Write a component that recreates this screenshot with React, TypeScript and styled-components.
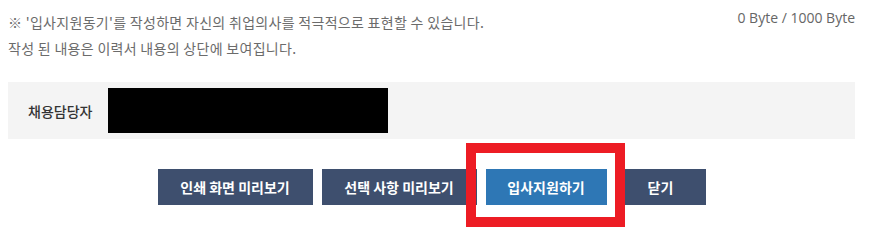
import React from "react";
import styled, { createGlobalStyle } from "styled-components";

const GlobalStyle = createGlobalStyle`
  html, body { margin: 0; padding: 0; background: #fff; }
  body { font-family: "Noto Sans CJK KR", "Noto Sans", sans-serif; }
`;

const Page = styled.div`
  width: 847px;
  min-height: 249px;
  margin-left: 8px;
  overflow: visible;
`;

const TopRow = styled.div`
  display: flex;
  justify-content: space-between;
  align-items: flex-start;
`;

const Notice = styled.div`
  padding-top: 9px;
  font-size: 14px;
  line-height: 26px;
  letter-spacing: 0.3px;
  color: #6b6b6b;
`;

const Counter = styled.div`
  padding-top: 5px;
  font-family: "Open Sans", "Noto Sans", sans-serif;
  font-size: 14px;
  line-height: 26px;
  color: #666;
`;

const InfoBox = styled.div`
  margin-top: 21px;
  height: 57px;
  background: #f4f4f4;
  display: flex;
  align-items: center;
  padding-left: 20px;
  box-sizing: border-box;
`;

const Label = styled.div`
  width: 80px;
  font-size: 14px;
  font-weight: 500;
  color: #333;
`;

const Redacted = styled.div`
  width: 280px;
  height: 45px;
  background: #000;
`;

const ButtonRow = styled.div`
  margin-top: 30px;
  display: flex;
  justify-content: center;
  gap: 9px;
`;

const Button = styled.button<{ $w: number; $primary?: boolean }>`
  display: block;
  width: ${(p) => p.$w}px;
  height: 36px;
  border: 0;
  padding: 0;
  background: ${(p) => (p.$primary ? "#2e77b5" : "#3e4f6e")};
  color: #fff;
  font-family: "Noto Sans CJK KR", "Noto Sans", sans-serif;
  font-size: 14px;
  font-weight: 700;
  cursor: pointer;
`;

const Marked = styled.div`
  position: relative;
  z-index: 1;
`;

const Highlight = styled.span`
  position: absolute;
  left: -20px;
  right: -18px;
  top: -26px;
  bottom: -22px;
  border: 10px solid #ed1c24;
  pointer-events: none;
`;

export default function App() {
  return (
    <>
      <GlobalStyle />
      <Page>
        <TopRow>
          <Notice>
            ※ '입사지원동기'를 작성하면 자신의 취업의사를 적극적으로 표현할 수 있습니다.
            <br />
            작성 된 내용은 이력서 내용의 상단에 보여집니다.
          </Notice>
          <Counter>0 Byte / 1000 Byte</Counter>
        </TopRow>
        <InfoBox>
          <Label>채용담당자</Label>
          <Redacted />
        </InfoBox>
        <ButtonRow>
          <Button $w={155}>인쇄 화면 미리보기</Button>
          <Button $w={155}>선택 사항 미리보기</Button>
          <Marked>
            <Button $w={121} $primary>
              입사지원하기
            </Button>
            <Highlight />
          </Marked>
          <Button $w={90}>닫기</Button>
        </ButtonRow>
      </Page>
    </>
  );
}
